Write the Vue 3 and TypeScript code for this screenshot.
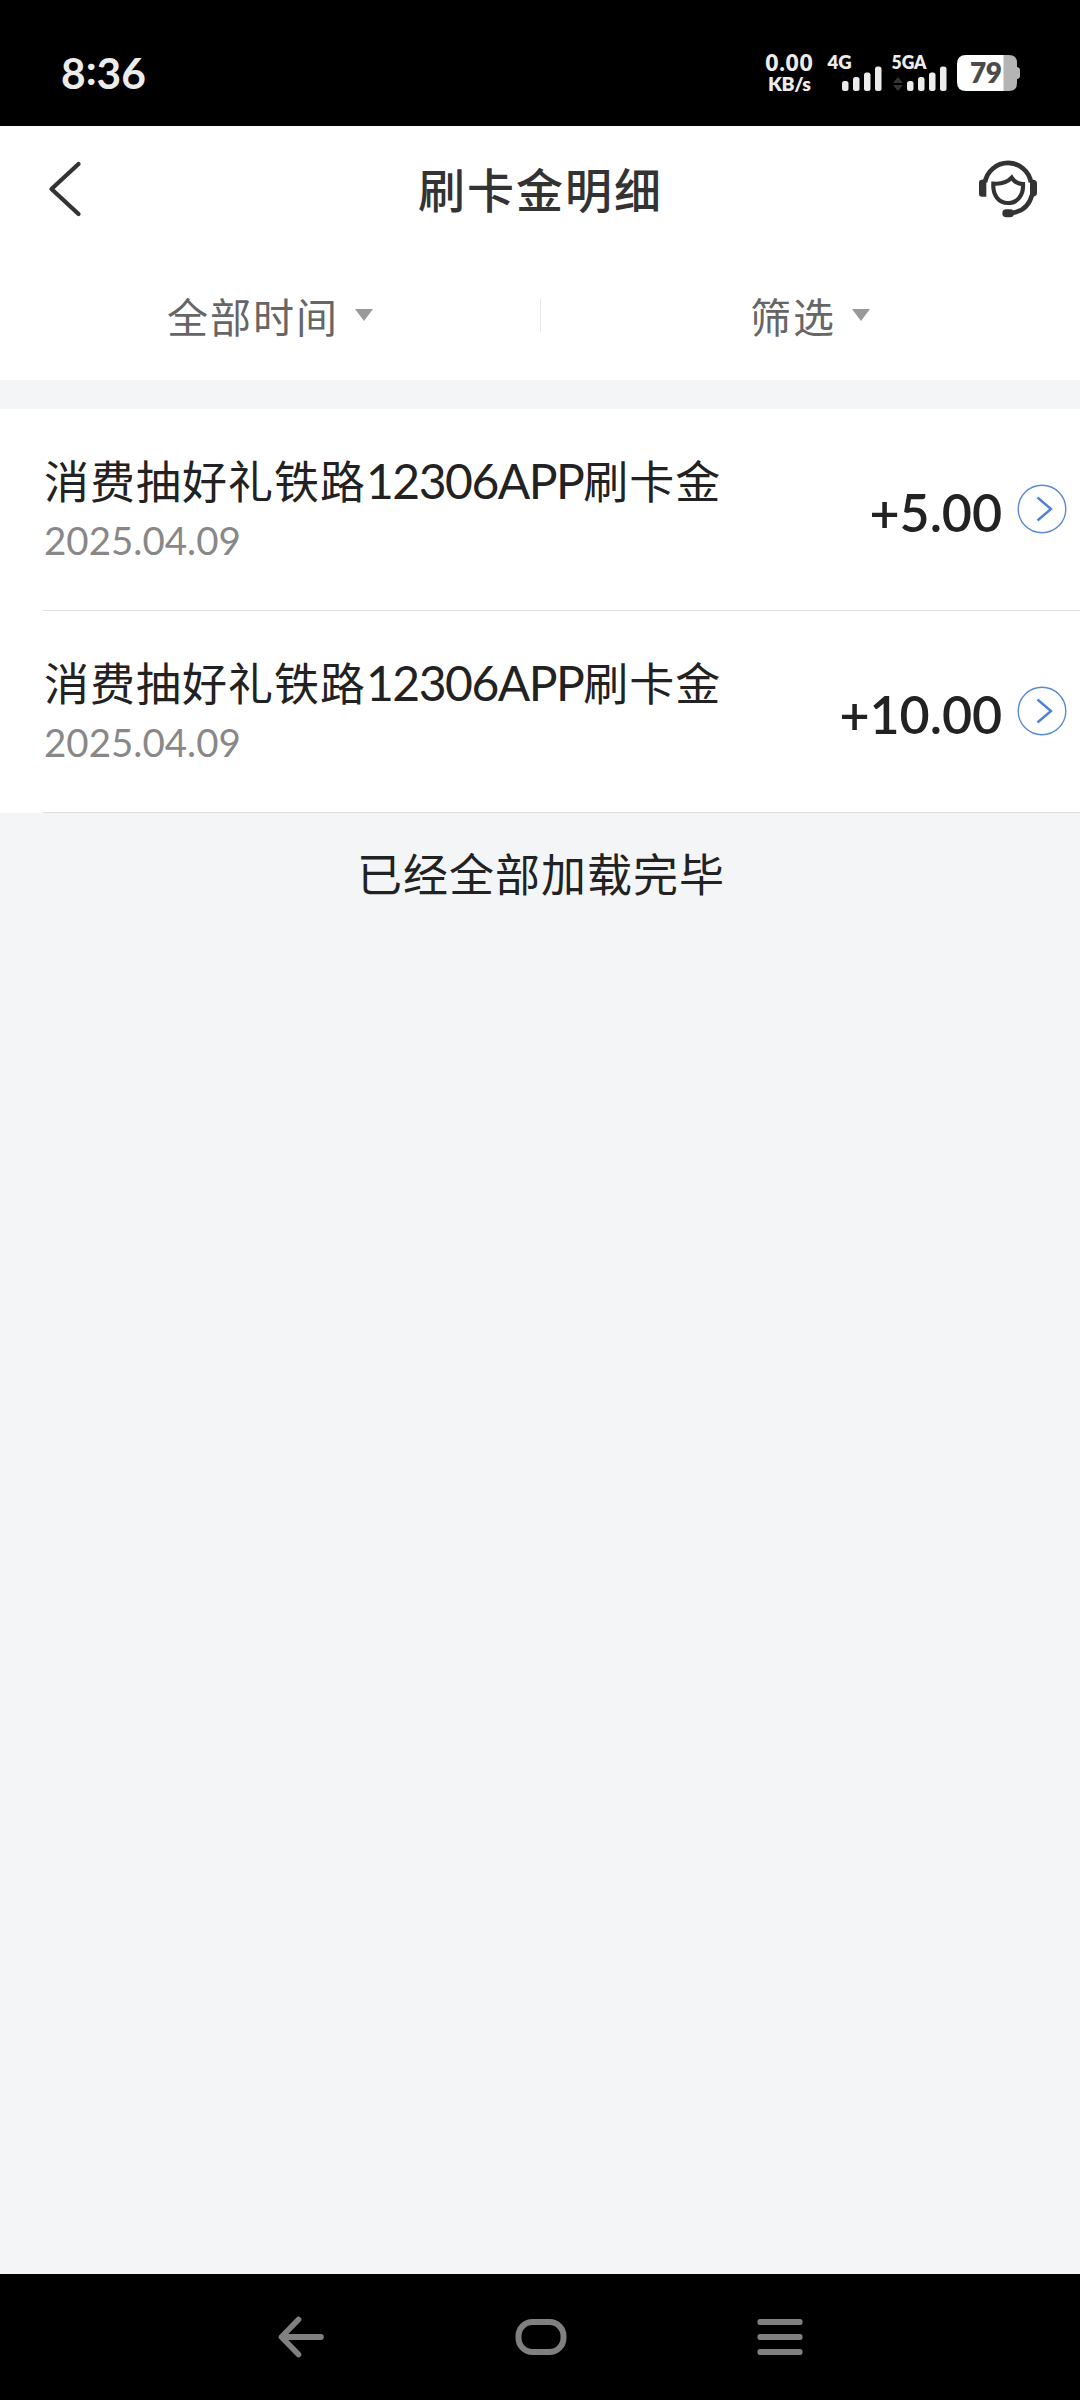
<script setup lang="ts">
interface RewardRecord {
  id: number
  source: string
  channel: string
  kind: string
  date: string
  amount: string
}

const records: RewardRecord[] = [
  { id: 1, source: '消费抽好礼铁路', channel: '12306APP', kind: '刷卡金', date: '2025.04.09', amount: '+5.00' },
  { id: 2, source: '消费抽好礼铁路', channel: '12306APP', kind: '刷卡金', date: '2025.04.09', amount: '+10.00' },
]

const filters: string[] = ['全部时间', '筛选']
</script>

<template>
  <div class="screen">
    <div class="status">
      <div class="clock">8<span class="colon">:</span>36</div>
      <svg class="indicators" width="264" height="70" viewBox="760 38 264 70">
        <g fill="#ececec" class="tiny">
          <text x="765.5" y="71" font-size="22" textLength="47">0.00</text>
          <text x="768" y="91" font-size="19.5" textLength="43">KB/s</text>
          <text x="827.5" y="69" font-size="18.5" textLength="24">4G</text>
          <text x="891.5" y="69" font-size="18.5" textLength="35" lengthAdjust="spacingAndGlyphs">5GA</text>
          <rect x="842" y="81" width="6.5" height="10" rx="2.5" />
          <rect x="853" y="77" width="6.5" height="14" rx="2.5" />
          <rect x="864" y="72.5" width="6.5" height="18.5" rx="2.5" />
          <rect x="875" y="66.5" width="6.5" height="24.5" rx="2.5" />
          <rect x="907" y="81" width="6.5" height="10" rx="2.5" />
          <rect x="918" y="77" width="6.5" height="14" rx="2.5" />
          <rect x="929" y="72.5" width="6.5" height="18.5" rx="2.5" />
          <rect x="940" y="66.5" width="6.5" height="24.5" rx="2.5" />
        </g>
        <path d="M893 83 L898 77 L903 83 Z M893 85 L898 91 L903 85 Z" fill="#333" />
        <path d="M1003 55 H1009 Q1017 55 1017 63 V67 Q1020 67.500 1020 70 V76 Q1020 78.500 1017 79 V83 Q1017 91 1009 91 H1003 Z" fill="#b4b4b4" />
        <path d="M1003.500 55 H966 Q957 55 957 64 V82 Q957 91 966 91 H1003.500 Z" fill="#fff" />
        <text class="tiny" x="970" y="83" font-size="28" fill="#4b4b4b" textLength="32">79</text>
      </svg>
    </div>

    <header class="header">
      <svg class="back" width="40" height="60" viewBox="45 159 40 60">
        <path d="M78.500 164 L51.500 189 L78.500 214" fill="none" stroke="#333" stroke-width="4.300" stroke-linecap="round" stroke-linejoin="round" />
      </svg>
      <h1>刷卡金明细</h1>
      <svg class="service" width="60" height="60" viewBox="117 90 180 180">
        <g fill="none" stroke="#333" stroke-width="14">
          <path d="M135 160 A70 70 0 0 1 273 160" />
          <path d="M276 198 Q262 250 208 252" />
          <path d="M160 164 C184 166 202 160 215 146 C223 159 236 165 249 165 C251 199 232 222 204 222 C176 222 158 199 160 164 Z" stroke-width="12.500" />
        </g>
        <path d="M139 150 V203 H124 Q117 203 117 196 V160 Q117 153 124 152 Z M270 150 L284 153 Q291 155 291 162 V193 Q291 200 284 202 L270 204 Z" fill="#333" />
        <rect x="187" y="241" width="35" height="24" rx="12" fill="#333" />
      </svg>
    </header>

    <nav class="filters">
      <div v-for="label in filters" :key="label" class="filter">
        <span>{{ label }}</span>
        <i class="caret"></i>
      </div>
    </nav>

    <main class="list">
      <section v-for="item in records" :key="item.id" class="row">
        <div class="info">
          <div class="name">{{ item.source }}<span class="latin">{{ item.channel }}</span>{{ item.kind }}</div>
          <div class="date">{{ item.date }}</div>
        </div>
        <div class="amount">{{ item.amount }}</div>
        <svg class="more" width="50" height="50" viewBox="0 0 50 50" fill="none" stroke="#5b8bd0">
          <circle cx="25" cy="25" r="23.800" stroke-width="1.400" />
          <path d="M20.500 13.500 L34 25 L20.500 36.500" stroke="#4f80d8" stroke-width="2.400" />
        </svg>
      </section>
    </main>

    <p class="end">已经全部加载完毕</p>

    <footer class="system-nav">
      <svg width="46" height="42" viewBox="0 0 46 42" fill="none" stroke="#808080" stroke-linecap="round" stroke-linejoin="round">
        <path d="M20.500 3.500 L3.500 21 L20.500 38.500" stroke-width="5.600" />
        <path d="M5 21 H42.800" stroke-width="6" />
      </svg>
      <svg width="52" height="42" viewBox="0 0 52 42" fill="none" stroke="#808080" stroke-width="6">
        <rect x="3.500" y="6" width="45" height="30" rx="14" />
      </svg>
      <svg width="46" height="42" viewBox="0 0 46 42" fill="#808080">
        <rect x="0.500" y="3" width="45" height="6" rx="2.500" />
        <rect x="0.500" y="18" width="45" height="6" rx="2.500" />
        <rect x="0.500" y="33" width="45" height="6" rx="2.500" />
      </svg>
    </footer>
  </div>
</template>

<style>
body {
  margin: 0;
  background: #f4f5f7;
}
</style>

<style scoped>
.screen {
  width: 1080px;
  height: 2400px;
  display: flex;
  flex-direction: column;
  background: #f4f5f7;
  color: #222;
  font-family: Lato, "Noto Sans CJK SC", sans-serif;
  overflow: hidden;
}
svg {
  display: block;
  flex: none;
}
.status {
  flex: none;
  height: 126px;
  box-sizing: border-box;
  padding: 20px 56px 0 61px;
  background: #000;
  display: flex;
  align-items: center;
  justify-content: space-between;
}
.clock {
  color: #ececec;
  font-size: 42.500px;
  font-weight: 700;
  line-height: 50px;
  white-space: nowrap;
}
.colon {
  position: relative;
  top: -4px;
}
.tiny {
  font-family: Lato, sans-serif;
  font-weight: 800;
}
.header {
  flex: none;
  height: 126px;
  box-sizing: border-box;
  padding: 0 41px 0 45px;
  background: #fff;
  display: flex;
  align-items: center;
  justify-content: space-between;
}
h1 {
  margin: 2px 0 0;
  color: #333;
  font-size: 47px;
  line-height: 60px;
  font-weight: 500;
  letter-spacing: 2px;
  padding-left: 17px;
}
.filters {
  flex: none;
  height: 128px;
  box-sizing: border-box;
  background: #fff;
  display: flex;
}
.filter {
  flex: 1;
  height: 128px;
  box-sizing: border-box;
  padding-top: 4px;
  display: flex;
  align-items: center;
  justify-content: center;
  color: #666;
  font-size: 41px;
  letter-spacing: 2px;
  line-height: 60px;
}
.filter + .filter {
  background: linear-gradient(#e8e8e8, #e8e8e8) 0 47px / 1px 33px no-repeat;
}
.caret {
  margin: -6px 0 0 16px;
  border: 9.500px solid transparent;
  border-top: 12px solid #999;
  border-bottom: 0;
}
.list {
  margin-top: 29px;
  background: #fff;
}
.row {
  height: 202px;
  box-sizing: border-box;
  padding: 0 13px 0 43px;
  background: linear-gradient(#dfe0e2, #dfe0e2) 43px 201px / 1037px 1px no-repeat;
  display: flex;
}
.info {
  flex: 1;
  padding: 42px 0 0 1px;
}
.name {
  font-size: 45px;
  line-height: 60px;
  letter-spacing: 1px;
  white-space: nowrap;
}
.latin {
  font-size: 48px;
  letter-spacing: -1.500px;
}
.date {
  color: #888;
  font-size: 38.500px;
  line-height: 56px;
}
.amount {
  padding-top: 72px;
  font-size: 52px;
  line-height: 62px;
  font-weight: 600;
  letter-spacing: -0.100px;
}
.more {
  margin: 75px 0 0 15px;
}
.end {
  margin: 32px 0 0;
  padding-left: 2px;
  font-size: 45px;
  line-height: 60px;
  letter-spacing: 1px;
  text-align: center;
}
.system-nav {
  flex: none;
  margin-top: auto;
  height: 126px;
  box-sizing: border-box;
  padding: 0 277px 0 278px;
  background: #000;
  display: flex;
  justify-content: space-between;
  align-items: center;
}
</style>
